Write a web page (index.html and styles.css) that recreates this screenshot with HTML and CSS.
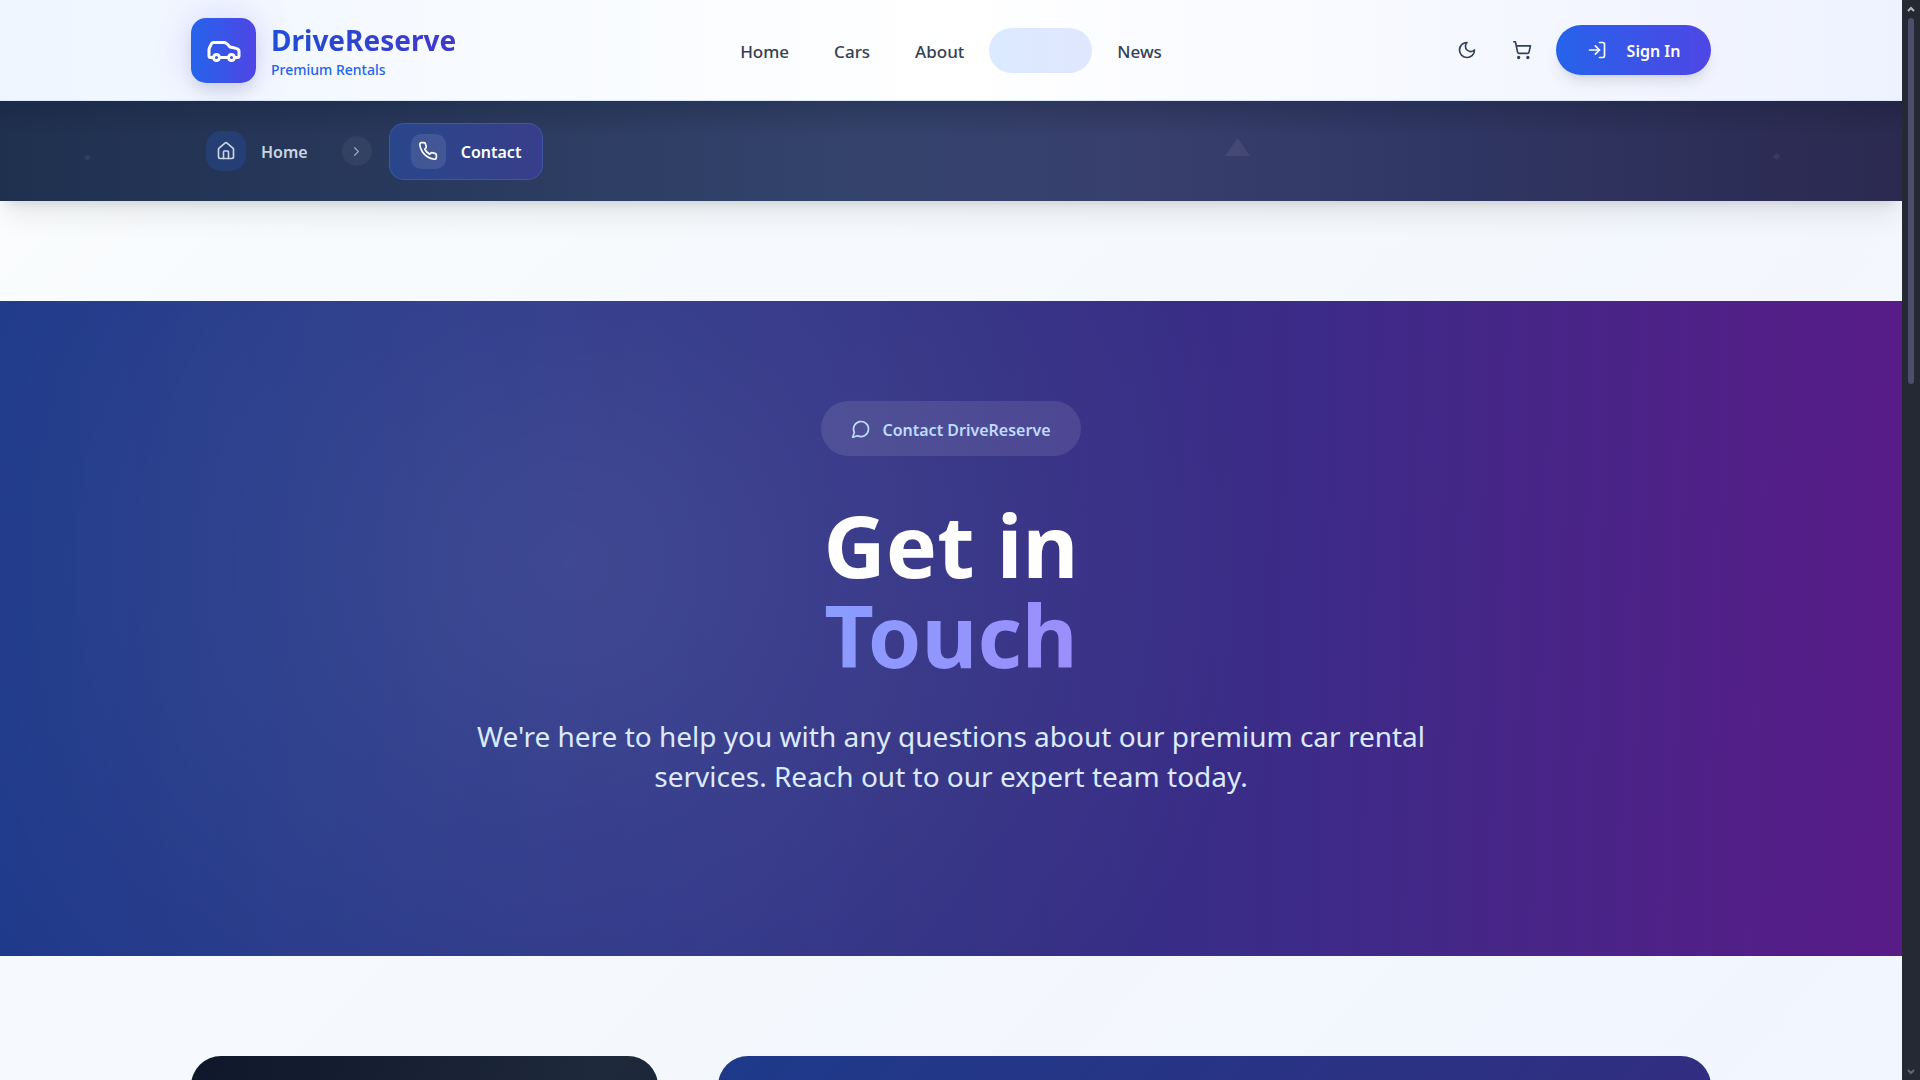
FILE: index.html
```html
<!DOCTYPE html>
<html lang="en">
<head>
<meta charset="utf-8">
<meta name="viewport" content="width=device-width, initial-scale=1">
<title>Contact | DriveReserve</title>
<link rel="stylesheet" href="styles.css">
</head>
<body>
<div class="page">
  <header class="site-header">
    <div class="container header-row">
      <a class="brand" href="#">
        <span class="brand-mark">
          <svg class="icon icon-lg" viewBox="0 0 24 24"><path d="M19 17h2c.6 0 1-.4 1-1v-3c0-.9-.7-1.700-1.500-1.900C18.700 10.600 16 10 16 10s-1.300-1.400-2.200-2.300c-.5-.4-1.100-.7-1.800-.7H5c-.6 0-1.100.4-1.400.9l-1.400 2.900A3.700 3.700 0 0 0 2 12v4c0 .6.4 1 1 1h2"/><circle cx="7" cy="17" r="2"/><path d="M9 17h6"/><circle cx="17" cy="17" r="2"/></svg>
        </span>
        <span class="brand-text">
          <span class="brand-name">DriveReserve</span>
          <span class="brand-tag">Premium Rentals</span>
        </span>
      </a>
      <nav class="main-nav" aria-label="Main">
        <a href="#">Home</a>
        <a href="#">Cars</a>
        <a href="#">About</a>
        <a class="active" href="#" aria-current="page">Contact</a>
        <a href="#">News</a>
      </nav>
      <div class="actions">
        <button class="icon-button" type="button" aria-label="Dark mode">
          <svg class="icon" viewBox="0 0 24 24"><path d="M12 3a6 6 0 0 0 9 9 9 9 0 1 1-9-9Z"/></svg>
        </button>
        <button class="icon-button" type="button" aria-label="Cart">
          <svg class="icon" viewBox="0 0 24 24"><circle cx="8" cy="21" r="1"/><circle cx="19" cy="21" r="1"/><path d="M2.050 2.050h2l2.660 12.420a2 2 0 0 0 2 1.580h9.780a2 2 0 0 0 1.950-1.570l1.650-7.430H5.120"/></svg>
        </button>
        <button class="sign-in" type="button">
          <svg class="icon" viewBox="0 0 24 24"><path d="M15 3h4a2 2 0 0 1 2 2v14a2 2 0 0 1-2 2h-4"/><path d="m10 17 5-5-5-5"/><path d="M15 12H3"/></svg>
          <span class="label">Sign In</span>
        </button>
      </div>
    </div>
  </header>

  <div class="crumb-bar">
    <span class="shape shape-dot"></span>
    <span class="shape shape-triangle"></span>
    <span class="shape shape-diamond"></span>
    <nav class="container crumbs" aria-label="Breadcrumb">
      <a class="crumb" href="#">
        <span class="crumb-icon crumb-icon-home"><svg class="icon" viewBox="0 0 24 24"><path d="M15 21v-8a1 1 0 0 0-1-1h-4a1 1 0 0 0-1 1v8"/><path d="M3 10a2 2 0 0 1 .709-1.528l7-6a2 2 0 0 1 2.582 0l7 6A2 2 0 0 1 21 10v9a2 2 0 0 1-2 2H5a2 2 0 0 1-2-2z"/></svg></span>
        <span class="label">Home</span>
      </a>
      <span class="crumb-sep"><svg class="icon icon-sm" viewBox="0 0 24 24"><path d="m9 18 6-6-6-6"/></svg></span>
      <a class="crumb crumb-current" href="#" aria-current="page">
        <span class="crumb-icon"><svg class="icon" viewBox="0 0 24 24"><path d="M22 16.920v3a2 2 0 0 1-2.180 2 19.790 19.790 0 0 1-8.630-3.070 19.500 19.500 0 0 1-6-6 19.790 19.790 0 0 1-3.070-8.670A2 2 0 0 1 4.110 2h3a2 2 0 0 1 2 1.720 12.840 12.840 0 0 0 .7 2.810 2 2 0 0 1-.45 2.110L8.090 9.910a16 16 0 0 0 6 6l1.270-1.270a2 2 0 0 1 2.110-.45 12.840 12.840 0 0 0 2.810.7A2 2 0 0 1 22 16.920z"/></svg></span>
        <span class="label">Contact</span>
      </a>
    </nav>
  </div>

  <main>
    <section class="hero">
      <p class="pill">
        <svg class="icon" viewBox="0 0 24 24"><path d="M7.900 20A9 9 0 1 0 4 16.100L2 22Z"/></svg>
        <span class="label">Contact DriveReserve</span>
      </p>
      <h1>Get in <span>Touch</span></h1>
      <p class="lead">We're here to help you with any questions about our premium car rental services. Reach out to our expert team today.</p>
    </section>
    <div class="container panels">
      <section class="panel panel-info"></section>
      <section class="panel panel-form"></section>
    </div>
  </main>
</div>
<div class="scrollbar" aria-hidden="true">
  <svg class="arrow" viewBox="0 0 8 6"><path d="M1 5 4 2 7 5"/></svg>
  <div class="track"><div class="thumb"></div></div>
  <svg class="arrow arrow-down" viewBox="0 0 8 6"><path d="M1 1 4 4 7 1"/></svg>
</div>
</body>
</html>
```
FILE: styles.css
```css
* { box-sizing: border-box; }

body {
  margin: 0;
  display: flex;
  height: 100vh;
  overflow: hidden;
  font-family: "Noto Sans", "Open Sans", sans-serif;
  font-size: 16px;
  line-height: 24px;
}

a { color: inherit; text-decoration: none; }
button { border: 0; padding: 0; font: inherit; cursor: pointer; }
h1, p { margin: 0; }

.page {
  flex: 1;
  min-width: 0;
  overflow: hidden;
  background: linear-gradient(135deg, #fdfefe, #f8fbfd 15%, #f4f8fd 60%, #f1f6ff);
}

.container {
  width: 100%;
  max-width: 1560px;
  margin: 0 auto;
  padding: 0 20px;
}

.icon {
  width: 20px;
  height: 20px;
  flex: none;
  fill: none;
  stroke: currentColor;
  stroke-width: 2;
  stroke-linecap: round;
  stroke-linejoin: round;
}
.icon-lg { width: 36px; height: 36px; }
.icon-sm { width: 15px; height: 15px; }

.label { padding-top: 2px; font-weight: 600; }

/* Header */
.site-header {
  border-bottom: 1px solid #dbeafe;
  background: linear-gradient(90deg, #eff6ff, #ffffff 50%, #eef2ff);
}
.header-row {
  display: grid;
  grid-template-columns: 1fr auto 1fr;
  align-items: center;
  height: 100px;
}
.brand { display: flex; align-items: center; gap: 15px; }
.brand-mark {
  display: grid;
  place-items: center;
  width: 65px;
  height: 65px;
  border-radius: 15px;
  color: #fff;
  background: linear-gradient(90deg, #2563eb, #4f46e5);
  box-shadow: 0 10px 15px -3px rgba(0, 0, 0, .1), 0 0 40px rgba(79, 70, 229, .2);
}
.brand-text { display: flex; flex-direction: column; gap: 2px; padding-top: 3px; }
.brand-name {
  font-size: 28px;
  line-height: 35px;
  font-weight: 700;
  color: transparent;
  background: linear-gradient(90deg, #1d4ed8, #4338ca);
  background-clip: text;
}
.brand-tag { font-size: 14px; line-height: 20px; font-weight: 500; color: #2563eb; }

.main-nav { display: flex; gap: 5px; font-size: 17px; font-weight: 500; color: #334155; }
.main-nav a { padding: 12px 20px 10px; line-height: 23px; border-radius: 23px; }
.main-nav .active { color: transparent; background: linear-gradient(90deg, #dbeafe, #e0e7ff); }

.actions { display: flex; justify-content: flex-end; align-items: center; gap: 10px; }
.icon-button {
  display: grid;
  place-items: center;
  width: 45px;
  height: 45px;
  border-radius: 50%;
  color: #334155;
  background: none;
}
.sign-in {
  display: flex;
  align-items: center;
  justify-content: center;
  gap: 20px;
  min-width: 155px;
  height: 50px;
  margin-left: 2px;
  border-radius: 25px;
  color: #fff;
  background: linear-gradient(90deg, #2563eb, #4f46e5);
  box-shadow: 0 10px 15px -3px rgba(0, 0, 0, .1), 0 4px 6px -4px rgba(0, 0, 0, .1);
}

/* Breadcrumb */
.crumb-bar {
  position: relative;
  background:
    linear-gradient(180deg, rgba(15, 23, 42, .25), rgba(15, 23, 42, 0) 35%),
    linear-gradient(90deg, #1f304f, #34436c 45%, #383f6c 60%, #303764 75%, #2b2950);
  box-shadow: 0 20px 25px -5px rgba(0, 0, 0, .08), 0 8px 10px -6px rgba(0, 0, 0, .1);
}
.crumbs { display: flex; align-items: center; height: 100px; color: #cbd5e1; }
.crumb { display: flex; align-items: center; gap: 15px; padding: 0 15px; }
.crumb-icon {
  display: grid;
  place-items: center;
  width: 35px;
  height: 35px;
  border-radius: 10px;
  background: rgba(255, 255, 255, .1);
}
.crumb-icon-home { width: 40px; height: 40px; border-radius: 15px; background: #253e73; }
.crumb-sep {
  display: grid;
  place-items: center;
  width: 30px;
  height: 30px;
  margin: 0 17px 0 19px;
  border-radius: 50%;
  color: #94a3b8;
  background: rgba(255, 255, 255, .05);
}
.crumb-current {
  height: 57px;
  padding: 0 21px;
  border: 1px solid rgba(129, 140, 248, .25);
  border-radius: 15px;
  color: #fff;
  background: linear-gradient(90deg, #29468a, #383e8b);
}
.shape { position: absolute; background: rgba(255, 255, 255, .07); }
.shape-dot { left: 85px; top: 54px; width: 5px; height: 5px; border-radius: 50%; }
.shape-triangle { left: 1225px; top: 37px; width: 25px; height: 18px; clip-path: polygon(50% 0, 100% 100%, 0 100%); }
.shape-diamond { right: 123px; top: 53px; width: 5px; height: 5px; transform: rotate(45deg); }

/* Hero */
.hero {
  display: flex;
  flex-direction: column;
  align-items: center;
  margin-top: 100px;
  padding: 100px 20px 160px;
  text-align: center;
  background:
    radial-gradient(circle at 30% 40%, rgba(255, 255, 255, .1), rgba(255, 255, 255, 0) 50%),
    linear-gradient(92deg, #1e3a8a, #322f83 52%, #3c2b88 68%, #581c87 99%);
}
.pill {
  display: flex;
  align-items: center;
  gap: 11px;
  height: 55px;
  padding: 0 30px;
  border-radius: 28px;
  color: #bfdbfe;
  background: rgba(255, 255, 255, .1);
}
h1 { margin-top: 44px; font-size: 86px; line-height: 90px; font-weight: 700; color: #fff; }
h1 span {
  display: block;
  color: transparent;
  background: linear-gradient(90deg, #8a9cff, #9b8efb);
  background-clip: text;
}
.lead { max-width: 960px; margin-top: 36px; font-size: 28px; line-height: 40px; color: #dbeafe; }

/* Panels */
.panels { display: grid; grid-template-columns: repeat(3, minmax(0, 1fr)); gap: 60px; margin-top: 100px; }
.panel { min-height: 1000px; border-radius: 30px; }
.panel-info { background: linear-gradient(110deg, #0f172a, #1e293b 50%, #0f172a); }
.panel-form { grid-column: span 2; background: linear-gradient(135deg, #1e3a8a, #312e81 50%, #581c87); }

/* Scrollbar */
.scrollbar {
  display: flex;
  flex-direction: column;
  align-items: center;
  width: 18px;
  padding: 6px 0 5px;
  background: #242933;
}
.arrow { width: 8px; height: 6px; fill: none; stroke: #b8b8b8; stroke-width: 2; }
.arrow-down { stroke: #666; }
.track { flex: 1; width: 6px; padding: 6px 0; }
.thumb { height: 35%; border-radius: 3px; background: #4c4f69; }
```
